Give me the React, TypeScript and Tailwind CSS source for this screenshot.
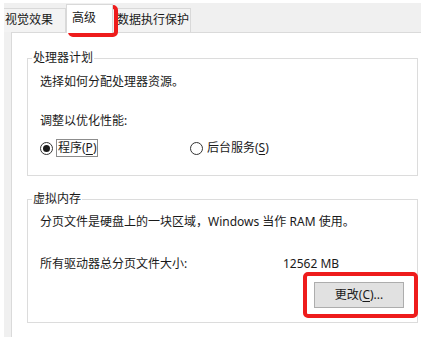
import React from 'react';

function Radio({ checked }: { checked?: boolean }) {
  return (
    <span className="w-[13px] h-[13px] rounded-full border border-[#333333] bg-white flex items-center justify-center shrink-0">
      {checked && <span className="w-[7px] h-[7px] rounded-full bg-[#1a1a1a]" />}
    </span>
  );
}

export default function App() {
  return (
    <div className="relative w-[421px] h-[337px] bg-white overflow-hidden pt-[3px] pl-[4px] text-[12px] text-[#1a1a1a] font-['Noto_Sans','Noto_Sans_CJK_SC',sans-serif]">
      <div className="h-full bg-[#f0f0f0] flex flex-col">
        {/* Tabs */}
        <div className="h-[29px] flex items-end shrink-0">
          <div className="w-[62px] h-[24px] pt-[3px] pl-[1px] leading-[16px] border-t border-r border-[#d9d9d9] bg-[#f3f3f3]">
            视觉效果
          </div>
          <div className="relative z-10 -mb-px w-[47px] h-[29px] pt-[5px] pl-[5px] leading-[16px] bg-white border border-b-0 border-[#d9d9d9]">
            高级
          </div>
          <div className="w-[78px] h-[24px] pt-[3px] pl-[4px] leading-[16px] border-t border-r border-[#d9d9d9] bg-[#f3f3f3]">
            数据执行保护
          </div>
        </div>

        {/* Panel */}
        <div className="flex-1 ml-[7px] bg-white border-l border-t border-[#dadada] pl-[15px] pr-[3px]">
          <fieldset className="mt-[17px] h-[126px] min-w-0 border border-[#dcdcdc]">
            <legend className="ml-[4px] px-[1px] leading-[16px]">处理器计划</legend>
            <div className="pl-[12px]">
              <p className="mt-[8px] leading-[16px]">选择如何分配处理器资源。</p>
              <p className="mt-[23px] leading-[16px]">调整以优化性能:</p>
              <div className="mt-[10px] h-[18px] flex items-center">
                <div className="w-[150px] flex items-center">
                  <Radio checked />
                  <span className="ml-[3px] px-[1px] leading-[16px] border border-[#8c8c8c]">
                    程序(<span className="underline underline-offset-2">P</span>)
                  </span>
                </div>
                <div className="flex items-center">
                  <Radio />
                  <span className="ml-[4px] leading-[16px]">
                    后台服务(<span className="underline underline-offset-2">S</span>)
                  </span>
                </div>
              </div>
            </div>
          </fieldset>

          <fieldset className="mt-[15px] h-[132px] min-w-0 border border-[#dcdcdc]">
            <legend className="ml-[4px] px-[1px] leading-[16px]">虚拟内存</legend>
            <div className="pl-[12px]">
              <p className="mt-[7px] leading-[16px]">分页文件是硬盘上的一块区域，Windows 当作 RAM 使用。</p>
              <div className="mt-[26px] flex leading-[16px]">
                <span className="w-[243px]">所有驱动器总分页文件大小:</span>
                <span>12562 MB</span>
              </div>
              <div className="mt-[10px] flex justify-end pr-[13px]">
                <button
                  type="button"
                  className="w-[90px] h-[26px] bg-[#e1e1e1] border border-[#adadad] text-[12px] leading-[16px]"
                >
                  更改(<span className="underline underline-offset-2">C</span>)...
                </button>
              </div>
            </div>
          </fieldset>
        </div>
      </div>

      {/* Red highlight annotations */}
      <div className="absolute left-[68px] top-[5px] w-[50px] h-[32px] border-[4px] border-[#ee1c1c] rounded-[5px] pointer-events-none" />
      <div className="absolute left-[303px] top-[272px] w-[115px] h-[46px] border-[4px] border-[#ee1c1c] rounded-[5px] pointer-events-none" />
    </div>
  );
}
